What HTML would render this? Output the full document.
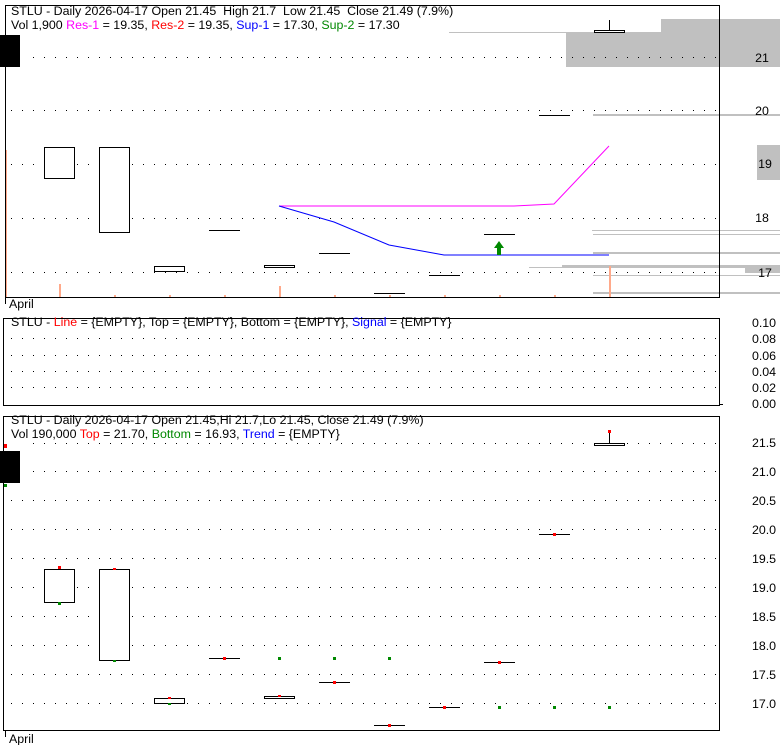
<!DOCTYPE html>
<html><head><meta charset="utf-8"><style>
body{margin:0;background:#fff;width:780px;height:745px;overflow:hidden}
svg{display:block}
text{font-family:"Liberation Sans",sans-serif;font-size:12.4px}
</style></head><body>
<svg width="780" height="745" xmlns="http://www.w3.org/2000/svg">
<defs>
<pattern id="dot" width="11" height="1" patternUnits="userSpaceOnUse"><rect x="0" width="1" height="1" fill="#000"/></pattern>
</defs>
<rect x="566" y="33" width="214" height="34" fill="#c0c0c0"/>
<rect x="661" y="19" width="119" height="14" fill="#c0c0c0"/>
<rect x="449" y="32" width="212" height="1" fill="#c0c0c0"/>
<rect x="757" y="145" width="23" height="35" fill="#c0c0c0"/>
<rect x="593" y="114" width="187" height="2" fill="#c0c0c0"/>
<rect x="592" y="230" width="188" height="1" fill="#c0c0c0"/>
<rect x="593" y="234" width="187" height="1" fill="#c0c0c0"/>
<rect x="593" y="252" width="187" height="2" fill="#c0c0c0"/>
<rect x="529" y="267" width="251" height="1" fill="#c0c0c0"/>
<rect x="562" y="265" width="218" height="3" fill="#c0c0c0"/>
<rect x="745" y="265" width="35" height="8" fill="#c0c0c0"/>
<rect x="593" y="275" width="187" height="1" fill="#c0c0c0"/>
<rect x="593" y="292" width="187" height="2" fill="#c0c0c0"/>
<g fill="url(#dot)">
<rect x="27" y="57" width="692" height="1"/><rect x="5" y="110" width="714" height="1"/>
<rect x="5" y="164" width="714" height="1"/><rect x="5" y="218" width="714" height="1"/>
<rect x="5" y="272" width="714" height="1"/>
</g>
<g fill="#ffa98a">
<rect x="5" y="150" width="2" height="148"/><rect x="59" y="284" width="2" height="14"/>
<rect x="279" y="286" width="2" height="12"/><rect x="609" y="266" width="2" height="32"/>
<rect x="114" y="295" width="2" height="3"/><rect x="169" y="295" width="2" height="3"/>
<rect x="224" y="295" width="2" height="3"/><rect x="334" y="295" width="2" height="3"/>
<rect x="389" y="295" width="2" height="3"/><rect x="444" y="295" width="2" height="3"/>
<rect x="499" y="295" width="2" height="3"/><rect x="554" y="295" width="2" height="3"/>
</g>
<rect x="0" y="35" width="20" height="32" fill="#000"/>
<g fill="#fff" stroke="#000" stroke-width="1">
<rect x="44.5" y="147.5" width="30" height="31"/>
<rect x="99.5" y="147.5" width="30" height="85"/>
<rect x="154.5" y="266.5" width="30" height="5"/>
<rect x="264.5" y="265.5" width="30" height="2"/>
<rect x="594.5" y="30.5" width="30" height="2"/>
</g>
<g stroke="#000" stroke-width="1">
<line x1="609.5" y1="20" x2="609.5" y2="30"/>
<line x1="209" y1="230.5" x2="240" y2="230.5"/>
<line x1="319" y1="253.5" x2="350" y2="253.5"/>
<line x1="374" y1="293.5" x2="405" y2="293.5"/>
<line x1="429" y1="275.5" x2="460" y2="275.5"/>
<line x1="484" y1="234.5" x2="515" y2="234.5"/>
<line x1="539" y1="115.5" x2="570" y2="115.5"/>
</g>
<polyline points="279,206 514,206 554,204 609,146" fill="none" stroke="#f0f" stroke-width="1"/>
<polyline points="279,206 334,222 389,245 444,255 609,255" fill="none" stroke="#00f" stroke-width="1"/>
<path d="M499 241 L504 248 L501 248 L501 255 L497 255 L497 248 L494 248 Z" fill="#080"/>
<rect x="5.5" y="5.5" width="714" height="292" fill="none" stroke="#000"/>
<g text-anchor="middle">
<text x="762" y="62">21</text><text x="762" y="115">20</text><text x="765" y="168">19</text>
<text x="762" y="222">18</text><text x="765" y="277">17</text>
</g>
<text x="11" y="15" xml:space="preserve">STLU - Daily 2026-04-17 Open 21.45  High 21.7  Low 21.45  Close 21.49 (7.9%)</text>
<text x="11" y="29">Vol 1,900 <tspan fill="#f0f">Res-1</tspan> = 19.35, <tspan fill="#f00">Res-2</tspan> = 19.35, <tspan fill="#00f">Sup-1</tspan> = 17.30, <tspan fill="#080">Sup-2</tspan> = 17.30</text>
<line x1="5.5" y1="298" x2="5.5" y2="304" stroke="#000"/>
<text x="9" y="308">April</text>

<g fill="url(#dot)">
<rect x="5" y="338" width="714" height="1"/><rect x="5" y="355" width="714" height="1"/>
<rect x="5" y="371" width="714" height="1"/><rect x="5" y="387" width="714" height="1"/>
</g>
<rect x="3.5" y="318.5" width="716" height="87" fill="none" stroke="#000"/>
<line x1="719" y1="404.5" x2="723" y2="404.5" stroke="#000"/>
<text x="11" y="326">STLU - <tspan fill="#f00">Line</tspan> = {EMPTY}, Top = {EMPTY}, Bottom = {EMPTY}, <tspan fill="#00f">Signal</tspan> = {EMPTY}</text>
<g text-anchor="middle">
<text x="764" y="327">0.10</text><text x="764" y="343">0.08</text><text x="764" y="360">0.06</text>
<text x="764" y="376">0.04</text><text x="764" y="392">0.02</text><text x="764" y="408">0.00</text>
</g>

<g fill="url(#dot)">
<rect x="27" y="443" width="692" height="1"/><rect x="27" y="471" width="692" height="1"/>
<rect x="5" y="500" width="714" height="1"/><rect x="5" y="529" width="714" height="1"/>
<rect x="5" y="558" width="714" height="1"/><rect x="5" y="587" width="714" height="1"/>
<rect x="5" y="616" width="714" height="1"/><rect x="5" y="645" width="714" height="1"/>
<rect x="5" y="674" width="714" height="1"/><rect x="5" y="703" width="714" height="1"/>
</g>
<rect x="0" y="451" width="20" height="32" fill="#000"/>
<g fill="#fff" stroke="#000">
<rect x="44.5" y="569.5" width="30" height="33"/>
<rect x="99.5" y="569.5" width="30" height="91"/>
<rect x="154.5" y="698.5" width="30" height="5"/>
<rect x="264.5" y="696.5" width="30" height="2"/>
<rect x="594.5" y="443.5" width="30" height="2"/>
</g>
<g stroke="#000">
<line x1="609.5" y1="432" x2="609.5" y2="443"/>
<line x1="209" y1="658.5" x2="240" y2="658.5"/>
<line x1="319" y1="682.5" x2="350" y2="682.5"/>
<line x1="374" y1="725.5" x2="405" y2="725.5"/>
<line x1="429" y1="707.5" x2="460" y2="707.5"/>
<line x1="484" y1="662.5" x2="515" y2="662.5"/>
<line x1="539" y1="534.5" x2="570" y2="534.5"/>
</g>
<g fill="#f00">
<rect x="4" y="444" width="3" height="4"/><rect x="58" y="566" width="3" height="3"/><rect x="113" y="568" width="3" height="2"/>
<rect x="168" y="697" width="3" height="2"/><rect x="223" y="657" width="3" height="3"/><rect x="278" y="695" width="3" height="2"/>
<rect x="333" y="681" width="3" height="3"/><rect x="388" y="724" width="3" height="3"/><rect x="443" y="706" width="3" height="3"/>
<rect x="498" y="661" width="3" height="3"/><rect x="553" y="533" width="3" height="3"/><rect x="608" y="430" width="3" height="3"/>
</g>
<g fill="#080">
<rect x="4" y="484" width="3" height="3"/><rect x="58" y="602" width="3" height="3"/><rect x="113" y="660" width="3" height="2"/>
<rect x="168" y="703" width="3" height="2"/>
<rect x="278" y="657" width="3" height="3"/><rect x="333" y="657" width="3" height="3"/><rect x="388" y="657" width="3" height="3"/>
<rect x="498" y="706" width="3" height="3"/><rect x="553" y="706" width="3" height="3"/><rect x="608" y="706" width="3" height="3"/>
</g>
<rect x="3.5" y="416.5" width="716" height="314" fill="none" stroke="#000"/>
<text x="11" y="424">STLU - Daily 2026-04-17 Open 21.45,Hi 21.7,Lo 21.45, Close 21.49 (7.9%)</text>
<text x="11" y="438">Vol 190,000 <tspan fill="#f00">Top</tspan> = 21.70, <tspan fill="#080">Bottom</tspan> = 16.93, <tspan fill="#00f">Trend</tspan> = {EMPTY}</text>
<g text-anchor="middle">
<text x="764" y="447">21.5</text><text x="764" y="476">21.0</text><text x="764" y="505">20.5</text>
<text x="764" y="534">20.0</text><text x="764" y="563">19.5</text><text x="764" y="592">19.0</text>
<text x="764" y="621">18.5</text><text x="764" y="650">18.0</text><text x="764" y="679">17.5</text>
<text x="764" y="708">17.0</text>
</g>
<line x1="5.5" y1="731" x2="5.5" y2="737" stroke="#000"/>
<text x="9" y="743">April</text>
</svg>
</body></html>
